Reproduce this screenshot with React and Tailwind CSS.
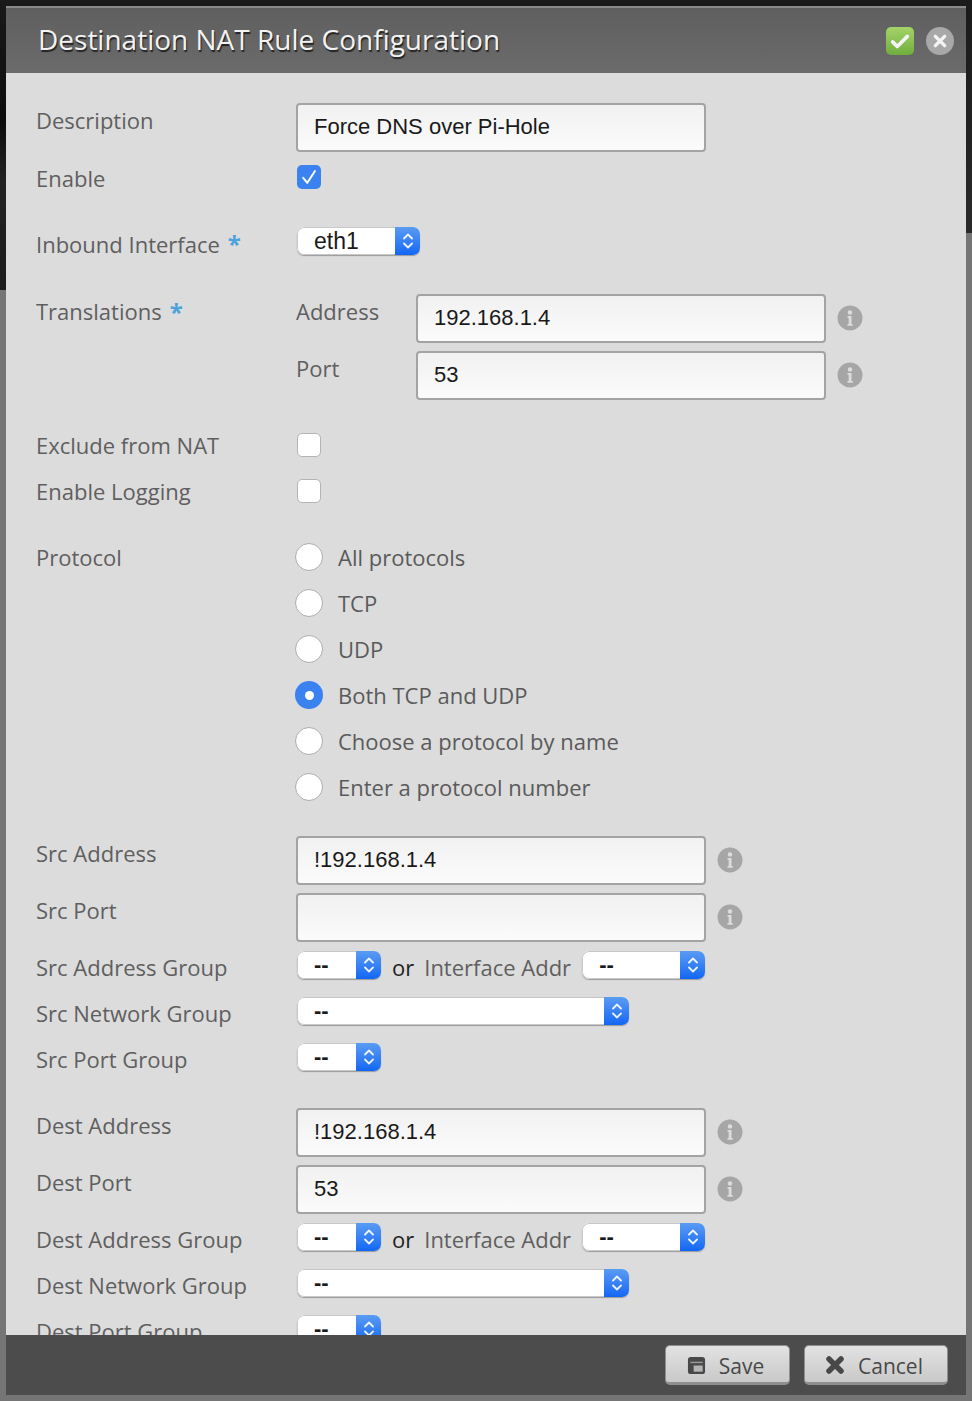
const sans = "font-['Open_Sans','Noto_Sans',sans-serif]";
const field = "font-['Liberation_Sans',Arial,sans-serif]";

function Info() {
  return (
    <svg viewBox="0 0 26 26" className="w-[26px] h-[26px] shrink-0">
      <circle cx="13" cy="13" r="12.5" fill="#a6a6a6" />
      <circle cx="13" cy="7.5" r="2.2" fill="#dcdcdc" />
      <path d="M10.5 11h4v8h1.2v1.8h-5.2V19h1.2v-6.2h-1.2z" fill="#dcdcdc" />
    </svg>
  );
}

function TextBox({ value, w = "w-[410px]" }) {
  return (
    <div className={`${w} h-[49px] shrink-0 rounded-[4px] border-2 border-[#a3a3a3] bg-gradient-to-b from-[#f1f1f1] to-[#fbfbfb] pl-4 pb-[2px] flex items-center text-[22px] text-[#1a1a1a] ${field}`}>
      {value}
    </div>
  );
}

function Select({ value, w, big }) {
  return (
    <div className={`${w} h-[28px] shrink-0 flex rounded-[7px] bg-white shadow-[0_1px_1px_#9a9a9a] overflow-hidden ${field}`}>
      <div className={`flex-1 pl-[16px] flex items-center rounded-l-[7px] border-y border-l border-[#c8c8c8] text-[#1a1a1a] ${big ? "text-[23px]" : "text-[22px] font-bold pb-[2px]"}`}>{value}</div>
      <div className="w-[25px] bg-gradient-to-b from-[#5a9bf2] to-[#0f66f4] flex items-center justify-center">
        <svg viewBox="0 0 14 20" className="w-[14px] h-[20px]" fill="none" stroke="#fff" strokeWidth="1.8" strokeLinecap="round" strokeLinejoin="round" opacity="0.9">
          <path d="M3 7.5 7 3.5l4 4M3 12.5l4 4 4-4" />
        </svg>
      </div>
    </div>
  );
}

function Check({ on }) {
  return on ? (
    <div className="w-[24px] h-[24px] rounded-[5px] bg-[#3a82f0] flex items-center justify-center">
      <svg viewBox="0 0 24 24" className="w-[20px] h-[20px]" fill="none" stroke="#fff" strokeWidth="2.4" strokeLinecap="round" strokeLinejoin="round">
        <path d="M5 13l5 6 9-14" />
      </svg>
    </div>
  ) : (
    <div className="w-[24px] h-[24px] rounded-[5px] bg-white border border-[#b4b4b4]" />
  );
}

function Radio({ on, label }) {
  return (
    <div className="h-[46px] flex items-center -ml-px">
      {on ? (
        <div className="w-[28px] h-[28px] rounded-full bg-[#3a82f0] flex items-center justify-center shrink-0">
          <div className="w-[9px] h-[9px] rounded-full bg-white" />
        </div>
      ) : (
        <div className="w-[28px] h-[28px] rounded-full bg-white border border-[#adadad] shrink-0" />
      )}
      <span className="ml-[15px] text-[22px] text-[#5a5a5a]">{label}</span>
    </div>
  );
}

function Label({ text, star, h = "h-[37px]" }) {
  return (
    <div className={`w-[260px] shrink-0 ${h} pb-[2px] flex items-center text-[22px] text-[#5f5f5f]`}>
      {text}
      {star && <span className="ml-2 text-[24px] leading-none text-[#4aa3dc] font-bold">*</span>}
    </div>
  );
}

function InputRow({ label, value, info = true, h = "h-[57px]" }) {
  return (
    <div className={`flex ${h}`}>
      <Label text={label} />
      <TextBox value={value} />
      {info && <div className="ml-[11px] pt-[11px]"><Info /></div>}
    </div>
  );
}

function SelectRow({ label, children }) {
  return (
    <div className="flex h-[46px]">
      <Label text={label} h="h-[46px]" />
      <div className="flex pt-[6px] pl-px">{children}</div>
    </div>
  );
}

function GroupPair({ label }) {
  return (
    <SelectRow label={label}>
      <Select value="--" w="w-[84px]" />
      <span className="ml-[11px] -mt-[6px] h-[46px] pb-[2px] flex items-center text-[22px] text-[#222222]">or</span>
      <span className="ml-[10px] -mt-[6px] h-[46px] pb-[2px] flex items-center text-[22px] text-[#5f5f5f] w-[158px]">Interface Addr</span>
      <Select value="--" w="w-[123px]" />
    </SelectRow>
  );
}

export default function App() {
  return (
    <div className={`w-[972px] h-[1401px] overflow-hidden flex ${sans}`}>
      <div className="w-[6px] shrink-0 bg-[linear-gradient(#1a1a1a_0,#0c0c0c_120px,#222222_180px,#1c1c1c_290px,#757575_290px)]" />
      <div className="flex-1 min-w-0 flex flex-col">
        <div className="h-[6px] shrink-0 bg-[#1a1a1a]" />
        <header className="h-[67px] shrink-0 border-t-2 border-[#8a8a8a] bg-gradient-to-b from-[#5f5f5f] to-[#6b6b6b] flex items-center pl-[32px] pr-[12px]">
          <h1 className="flex-1 text-[28px] pb-[4px] text-[#f2f2f2] [text-shadow:1px_2px_1px_#222]">Destination NAT Rule Configuration</h1>
          <div className="w-[28px] h-[28px] rounded-[5px] bg-gradient-to-b from-[#a5d36a] to-[#6fae3d] flex items-center justify-center">
            <svg viewBox="0 0 24 24" className="w-[22px] h-[22px]" fill="none" stroke="#f4f4f4" strokeWidth="4" strokeLinecap="round" strokeLinejoin="round">
              <path d="M4 13l5 5L20 7" />
            </svg>
          </div>
          <div className="ml-[12px] w-[28px] h-[28px] rounded-full bg-[#a8a8a8] flex items-center justify-center">
            <svg viewBox="0 0 24 24" className="w-[16px] h-[16px]" fill="none" stroke="#f4f4f4" strokeWidth="5" strokeLinecap="round">
              <path d="M5 5l14 14M19 5 5 19" />
            </svg>
          </div>
        </header>

        <main className="flex-1 min-h-0 overflow-hidden bg-[#dcdcdc] pl-[30px] pt-[30px]">
          <InputRow label="Description" value="Force DNS over Pi-Hole" info={false} />

          <div className="flex h-[38px]">
            <Label text="Enable" h="h-[38px]" />
            <div className="pt-[5px] pl-px"><Check on /></div>
          </div>

          <div className="mt-[24px] flex h-[46px]">
            <Label text="Inbound Interface" star h="h-[46px]" />
            <div className="pt-[5px] pl-px"><Select value="eth1" w="w-[123px]" big /></div>
          </div>

          <div className="mt-[26px] flex">
            <Label text="Translations" star />
            <div>
              {[["Address", "192.168.1.4"], ["Port", "53"]].map(([l, v]) => (
                <div key={l} className="flex h-[57px]">
                  <div className="w-[120px] h-[37px] pb-[2px] flex items-center text-[22px] text-[#5f5f5f]">{l}</div>
                  <TextBox value={v} />
                  <div className="ml-[11px] pt-[11px]"><Info /></div>
                </div>
              ))}
            </div>
          </div>

          <div className="mt-[15px] flex h-[46px]">
            <Label text="Exclude from NAT" h="h-[46px]" />
            <div className="pt-[10px] pl-px"><Check /></div>
          </div>
          <div className="flex h-[46px]">
            <Label text="Enable Logging" h="h-[46px]" />
            <div className="pt-[10px] pl-px"><Check /></div>
          </div>

          <div className="mt-[19px] flex">
            <Label text="Protocol" h="h-[48px]" />
            <div>
              <Radio label="All protocols" />
              <Radio label="TCP" />
              <Radio label="UDP" />
              <Radio label="Both TCP and UDP" on />
              <Radio label="Choose a protocol by name" />
              <Radio label="Enter a protocol number" />
            </div>
          </div>

          <div className="mt-[26px]">
            <InputRow label="Src Address" value="!192.168.1.4" />
            <InputRow label="Src Port" value="" h="h-[52px]" />
            <GroupPair label="Src Address Group" />
            <SelectRow label="Src Network Group"><Select value="--" w="w-[332px]" /></SelectRow>
            <SelectRow label="Src Port Group"><Select value="--" w="w-[84px]" /></SelectRow>
          </div>

          <div className="mt-[25px]">
            <InputRow label="Dest Address" value="!192.168.1.4" />
            <InputRow label="Dest Port" value="53" h="h-[52px]" />
            <GroupPair label="Dest Address Group" />
            <SelectRow label="Dest Network Group"><Select value="--" w="w-[332px]" /></SelectRow>
            <SelectRow label="Dest Port Group"><Select value="--" w="w-[84px]" /></SelectRow>
          </div>
        </main>

        <footer className="h-[60px] shrink-0 bg-[#4c4c4c] flex items-center justify-end gap-[14px] pr-[18px]">
          <button className="w-[125px] h-[40px] rounded-[5px] border border-[#8f8f8f] border-b-[3px] bg-gradient-to-b from-[#e2e2e2] to-[#c9c9c9] flex items-center justify-center gap-[13px] pr-[4px] text-[21px] text-[#484848]">
            <svg viewBox="0 0 20 20" className="w-[19px] h-[19px] mt-[2px]">
              <rect x="1" y="1" width="18" height="18" rx="3" fill="#484848" />
              <path d="M3.5 6h13v1.5h-13z" fill="#9a9a9a" />
              <path d="M7 10h9.5v6.5H7z" fill="#b4b4b4" />
            </svg>
            <span className="pt-[5px]">Save</span>
          </button>
          <button className="w-[144px] h-[40px] rounded-[5px] border border-[#8f8f8f] border-b-[3px] bg-gradient-to-b from-[#e2e2e2] to-[#c9c9c9] flex items-center justify-center gap-[13px] pr-[4px] text-[21px] text-[#484848]">
            <svg viewBox="0 0 20 20" className="w-[20px] h-[20px] mt-[2px]" fill="none" stroke="#484848" strokeWidth="5.5" strokeLinecap="round">
              <path d="M4 4l12 12M16 4 4 16" />
            </svg>
            <span className="pt-[5px]">Cancel</span>
          </button>
        </footer>
        <div className="h-[6px] shrink-0 bg-[#757575]" />
      </div>
      <div className="w-[6px] shrink-0 bg-[linear-gradient(#1a1a1a_0,#2a2a2a_233px,#757575_233px)]" />
    </div>
  );
}
